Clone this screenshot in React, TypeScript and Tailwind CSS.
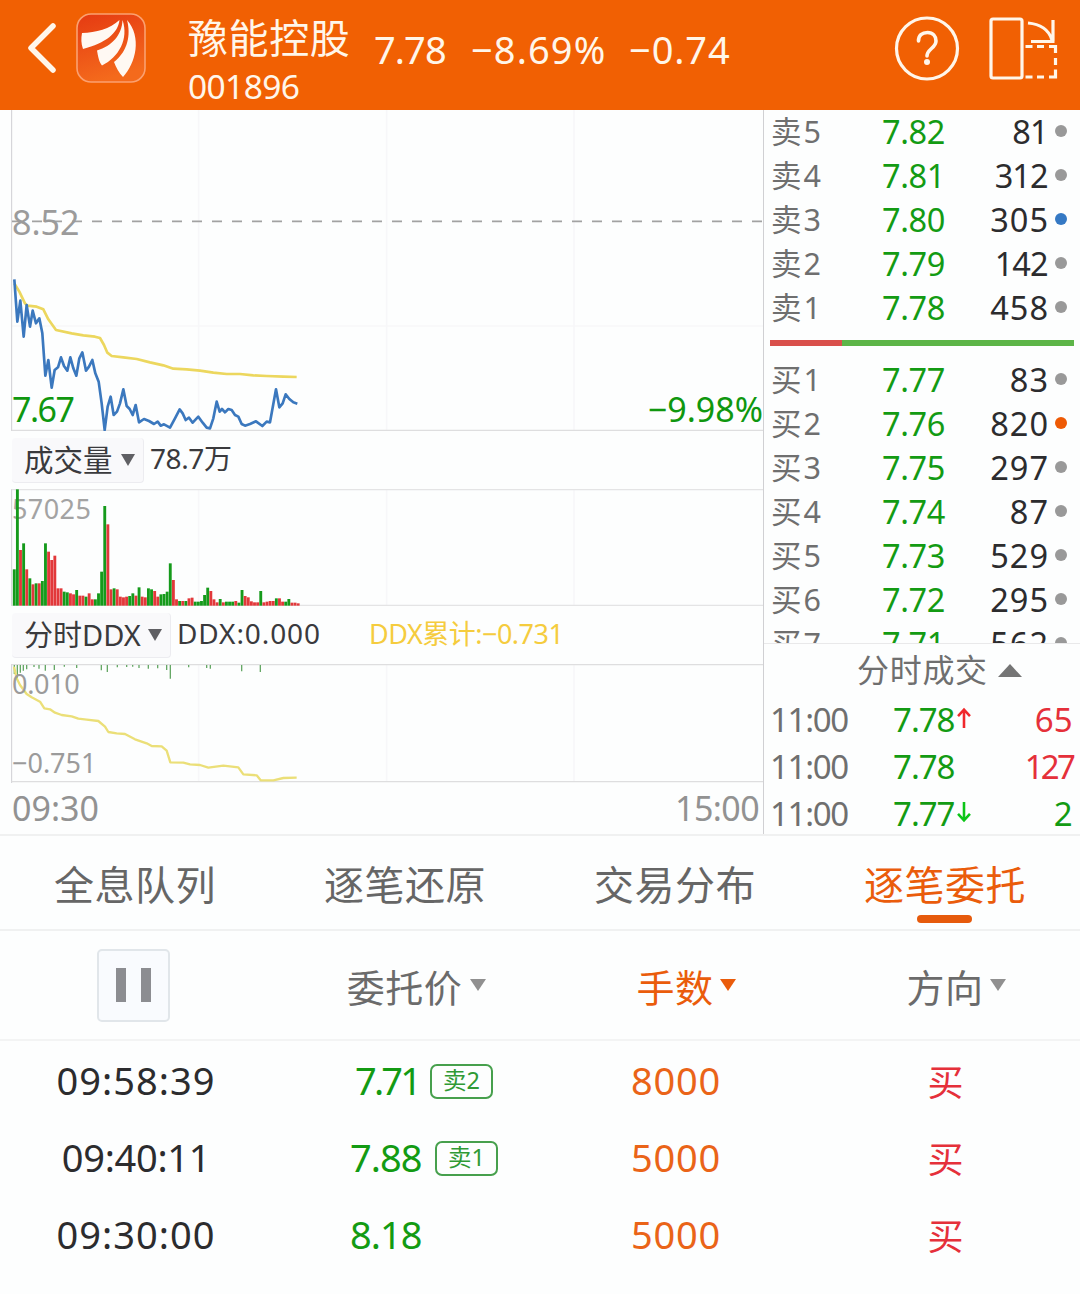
import React from 'react';
import clsx from 'clsx';

type Side = 'up' | 'down';

interface Quote {
  label: string;
  price: string;
  volume: string;
  dot?: string;
}

interface Tick {
  time: string;
  price: string;
  volume: string;
  arrow?: Side;
  side: Side;
}

interface Order {
  time: string;
  price: string;
  tag?: string;
  lots: string;
  priceClass?: string;
  timeClass?: string;
}

const asks: Quote[] = [
  { label: '卖5', price: '7.82', volume: '81' },
  { label: '卖4', price: '7.81', volume: '312' },
  { label: '卖3', price: '7.80', volume: '305', dot: 'bg-[#3579c4]' },
  { label: '卖2', price: '7.79', volume: '142' },
  { label: '卖1', price: '7.78', volume: '458' },
];

const bids: Quote[] = [
  { label: '买1', price: '7.77', volume: '83' },
  { label: '买2', price: '7.76', volume: '820', dot: 'bg-[#ee5a05]' },
  { label: '买3', price: '7.75', volume: '297' },
  { label: '买4', price: '7.74', volume: '87' },
  { label: '买5', price: '7.73', volume: '529' },
  { label: '买6', price: '7.72', volume: '295' },
  { label: '买7', price: '7.71', volume: '562' },
];

const ticks: Tick[] = [
  { time: '11:00', price: '7.78', volume: '65', arrow: 'up', side: 'up' },
  { time: '11:00', price: '7.78', volume: '127', side: 'up' },
  { time: '11:00', price: '7.77', volume: '2', arrow: 'down', side: 'down' },
];

const tabs = ['全息队列', '逐笔还原', '交易分布', '逐笔委托'];

const orders: Order[] = [
  { time: '09:58:39', price: '7.71', tag: '卖2', lots: '8000', priceClass: 'w-[62px] tracking-[-2.8px]' },
  { time: '09:40:11', price: '7.88', tag: '卖1', lots: '5000', timeClass: 'tracking-[-0.3px]' },
  { time: '09:30:00', price: '8.18', lots: '5000' },
];

// chart series use three units per pixel
const priceLine =
  '43,508 52,635 61,572 71,680 80,585 90,650 98,602 108,640 118,625 127,670 136,797 145,750 155,833 164,780 174,772 183,742 192,768 202,782 211,742 220,775 229,797 238,745 247,727 258,782 267,770 277,750 286,790 296,815 305,880 314,960 323,890 332,860 341,915 351,905 360,880 370,838 380,888 389,897 398,915 407,885 417,937 432,927 447,933 462,942 473,935 482,947 492,943 510,953 525,925 539,898 548,910 557,930 567,923 578,938 595,920 608,938 620,953 630,955 640,925 650,875 659,905 666,897 675,907 685,897 695,900 705,915 715,920 725,942 735,947 750,942 768,934 787,948 800,935 810,937 828,838 838,892 848,880 857,853 868,867 880,877 892,881';

const averageLine =
  '43,520 58,545 75,580 82,587 110,590 130,598 145,628 168,660 215,670 250,676 285,680 300,684 312,705 322,728 335,738 370,742 410,747 450,757 490,766 520,776 560,778 600,782 640,788 680,792 720,792 760,796 800,798 850,800 890,801';

const ddxLine =
  '42,8 50,43 60,63 80,90 95,100 120,113 133,133 150,136 165,146 185,153 215,157 235,164 260,167 295,171 315,188 325,204 350,208 375,210 405,226 440,238 455,246 485,247 500,260 511,295 550,296 570,301 600,303 625,311 670,305 715,310 730,331 770,334 782,349 820,349 850,342 890,341';

const volumes: number[] = [
  109, 349, 167, 187, 109, 82, 64, 67, 67, 74, 187, 162, 137, 150, 52, 52, 42, 40, 37, 34, 47, 30, 30, 27, 37, 19, 19, 37, 102, 299,
  244, 49, 52, 49, 27, 25, 27, 29, 37, 30, 55, 27, 25, 52, 49, 44, 27, 34, 35, 42, 127, 77, 19, 14, 14, 14, 22, 24, 12, 12,
  14, 32, 54, 44, 19, 10, 20, 10, 12, 12, 12, 14, 9, 47, 29, 25, 13, 10, 10, 44, 10, 12, 14, 14, 22, 22, 12, 12, 20, 9,
  9, 7,
];
// one letter per bar: g falls, r rises
const volumeSides =
  'ggrgrgrgrg' + 'grrrrrggrr' + 'grrgrrgggg' + 'rrgrrrrggr' + 'grrggrrggg' + 'grrgrgrrgg' + 'gggrrrgrgg' + 'grggrrrrrg' + 'rrrrgrrgg' + 'rrr';

const ddxTicks: [number, number][] = [
  [43, 30], [52, 45], [61, 26], [70, 20], [80, 16], [102, 9], [117, 14], [136, 20], [163, 18], [193, 8], [230, 12],
  [304, 19], [322, 24], [352, 10], [380, 9], [398, 8], [417, 12], [445, 14], [473, 13], [500, 18], [511, 44],
  [566, 10], [620, 12], [631, 14], [725, 22], [781, 24],
];

const Caret: React.FC<{ className?: string }> = ({ className }) => (
  <svg viewBox="0 0 16 12" preserveAspectRatio="none" className={clsx('shrink-0 fill-current', className)}>
    <path d="M0 0h16L8 12z" />
  </svg>
);

const Grid: React.FC<{ height: number }> = ({ height }) => (
  <g stroke="#f7f7f9" strokeWidth={5}>
    <path d={`M596 0V${height}M1160 0V${height}M1722 0V${height}`} />
  </g>
);

const Header: React.FC = () => (
  <header className="flex h-[110px] items-start bg-[#f16003] text-[#fff6ea]">
    <svg viewBox="0 0 30 52" className="ml-[27px] mt-[22px] h-[52px] w-[30px]" fill="none" stroke="currentColor" strokeWidth="5.5" strokeLinecap="round" strokeLinejoin="round">
      <path d="M26 4 4 26l22 22" />
    </svg>
    <svg viewBox="0 0 70 70" className="ml-[19px] mt-[13px] h-[70px] w-[70px]">
      <defs>
        <linearGradient id="logo" x1="0" y1="0" x2="0.3" y2="1">
          <stop offset="0" stopColor="#e53a12" />
          <stop offset="1" stopColor="#f46a1c" />
        </linearGradient>
      </defs>
      <rect x="1" y="1" width="68" height="68" rx="14" fill="url(#logo)" stroke="#fba070" strokeWidth="1.6" />
      <g fill="#fff9f3">
        <path d="M6 20C20 19.500 34 16 43.500 7C42 20 30 30 7 36C5 31 5 25 6 20z" />
        <path d="M46.500 7C53 26 43 44 26 52.500C23 49 22 43 21 37.500C36 33 46 22 46.500 7z" />
        <path d="M51 7C66 24 60 50 47 64C43 60 40 54 38 49C52 38 55 22 51 7z" />
      </g>
    </svg>
    <div className="ml-[42px] w-[187px]">
      <div className="mt-[15px] text-[40px] leading-[46px] tracking-[0.6px]">豫能控股</div>
      <div className="mt-[7px] text-[33.5px] leading-[36px] tracking-[-0.6px]">001896</div>
    </div>
    <div className="mt-[26px] flex text-[38px] leading-[46px]">
      <span className="-ml-px mr-px w-[96px] tracking-[-0.9px]">7.78</span>
      <span className="w-[158px] tracking-[1.1px]">−8.69%</span>
      <span className="tracking-[0.9px]">−0.74</span>
    </div>
    <svg viewBox="0 0 66 66" className="ml-auto mt-4 h-[66px] w-[66px]" fill="none" stroke="currentColor" strokeWidth="3.2" strokeLinecap="round">
      <circle cx="33" cy="32.5" r="30.5" />
      <path d="M24.500 25C24.500 19.500 28 16.500 33.500 16.500S42 20 42 25C42 32 33 33 33 40" strokeWidth="3.6" />
      <circle cx="33" cy="46" r="3" fill="currentColor" stroke="none" />
    </svg>
    <svg viewBox="0 0 70 66" className="ml-[29px] mr-[21px] mt-4 h-[66px] w-[70px]" fill="none" stroke="currentColor" strokeWidth="3.2">
      <rect x="2" y="3" width="31" height="59" rx="2" />
      <path d="M39 7C51 8 60 14 63 24M64 4V25M42 25.500H65.500" />
      <path d="M36.500 30.500H43.500M48 30.500H55M60 30.500H66.500V37M66.500 42V49M66.500 53.500V61H60M55 61H48M43.500 61H36.500" />
    </svg>
  </header>
);

const PriceChart: React.FC = () => (
  <div className="relative h-[321px]">
    <svg viewBox="0 0 2289 963" className="h-[321px] w-[763px]" fill="none">
      <Grid height={963} />
      <path d="M36 648H2289" stroke="#f7f7f9" strokeWidth={4} />
      <path d="M35 0V963" stroke="#cfcfd3" strokeWidth={3} />
      <path d="M35 961H2289" stroke="#dededf" strokeWidth={4} />
      <path d="M36 334H2289" stroke="#a2a2a2" strokeWidth={5} strokeDasharray="30 30" />
      <polyline points={averageLine} stroke="#ecd75e" strokeWidth={8} strokeLinejoin="round" />
      <polyline points={priceLine} stroke="#3b78be" strokeWidth={8} strokeLinejoin="round" />
    </svg>
    <span className="absolute left-[12px] top-[92px] text-[34px] leading-[40px] text-[#9b9b9b]">8.52</span>
    <span className="absolute left-[12px] top-[279px] text-[34px] leading-[40px] tracking-[-1.5px] text-[#0f970f]">7.67</span>
    <span className="absolute right-0 top-[279px] text-[34px] leading-[40px] text-[#0f970f]">−9.98%</span>
  </div>
);

const VolumeChart: React.FC = () => (
  <div className="relative h-[117px]">
    <svg viewBox="0 0 2289 351" className="h-[117px] w-[763px]">
      <Grid height={351} />
      <path d="M35 0V351" stroke="#cfcfd3" strokeWidth={3} />
      <path d="M35 2H2289M35 349H2289" stroke="#e4e4e5" strokeWidth={4} />
    </svg>
    <span className="absolute left-[12px] top-[3px] text-[27px] leading-[34px] tracking-[0.4px] text-[#a3a3a3]">57025</span>
    <svg viewBox="0 0 2289 351" className="absolute left-0 top-0 h-[117px] w-[763px]">
      {volumes.map((v, i) => (
        <rect key={i} x={38.5 + i * 9.36} y={350 - v} width={8.6} height={v} fill={volumeSides[i] === 'g' ? '#159a1b' : '#e2383a'} />
      ))}
    </svg>
  </div>
);

const DdxChart: React.FC = () => (
  <div className="relative h-[119px]">
    <svg viewBox="0 0 2289 357" className="h-[119px] w-[763px]" fill="none">
      <Grid height={351} />
      <path d="M35 0V357" stroke="#cfcfd3" strokeWidth={3} />
      <path d="M35 2H2289M35 353H2289" stroke="#dededf" strokeWidth={4} />
      {ddxTicks.map(([x, h]) => (
        <path key={x} d={`M${x} 3V${h}`} stroke="#66a866" strokeWidth={4} />
      ))}
      <polyline points={ddxLine} stroke="#ebdf78" strokeWidth={7} strokeLinejoin="round" />
    </svg>
    <span className="absolute left-[12px] top-[3px] text-[27px] leading-[34px] tracking-[-0.3px] text-[#9b9b9b]">0.010</span>
    <span className="absolute left-[12px] top-[82px] text-[27px] leading-[34px] text-[#9b9b9b]">−0.751</span>
  </div>
);

const ChartColumn: React.FC = () => (
  <div className="w-[764px] border-r border-[#d0d0d3]">
    <PriceChart />
    <div className="flex h-[58px] items-center pl-3 text-[#3a3a3d]">
      <div className="flex h-[45px] w-[132px] items-center rounded-sm border-b border-r border-[#ececf0] bg-[#f9f9fb] pl-3 text-[29.5px]">
        成交量
        <Caret className="ml-2 h-3 w-[14px] text-[#606064]" />
      </div>
      <span className="-mt-1 ml-1.5 text-[28px] tracking-[-0.4px]">78.7万</span>
    </div>
    <VolumeChart />
    <div className="flex h-[58px] items-center pl-3 text-[#3a3a3d]">
      <div className="flex h-[45px] w-[159px] items-center rounded-sm border-b border-r border-[#ececf0] bg-[#f9f9fb] pl-3 text-[29px]">
        分时DDX
        <Caret className="ml-[7px] h-3 w-[14px] text-[#606064]" />
      </div>
      <span className="-mt-1 ml-1.5 w-[192px] text-[28px] tracking-[0.9px]">DDX:0.000</span>
      <span className="-mt-1 text-[27px] tracking-[-0.5px] text-[#f5cc3e]">DDX累计:−0.731</span>
    </div>
    <DdxChart />
    <div className="flex h-[50px] items-center justify-between pl-3 pr-1 text-[34px] text-[#929292]">
      <span>09:30</span>
      <span className="tracking-[-0.6px]">15:00</span>
    </div>
  </div>
);

const QuoteRow: React.FC<{ quote: Quote }> = ({ quote }) => (
  <div className="flex h-11 shrink-0 items-center pl-[7px]">
    <span className="-mt-0.5 w-[61px] text-[30.5px] tracking-[2px] text-[#6f6f6f]">{quote.label}</span>
    <span className="w-[113px] text-right text-[32.5px] tracking-[-0.4px] text-[#139b13]">{quote.price}</span>
    <span
      className={clsx(
        'w-[104px] text-right text-[32.5px] text-[#2c2c2e]',
        quote.volume.includes('1') ? 'pr-[1.5px] tracking-[-1px]' : 'tracking-[1px]',
      )}
    >
      {quote.volume}
    </span>
    <span className={clsx('-mt-0.5 ml-1.5 h-3 w-3 rounded-full', quote.dot ?? 'bg-[#999999]')} />
  </div>
);

const Arrow: React.FC<{ side: Side }> = ({ side }) => (
  <svg
    viewBox="0 0 16 24"
    className={clsx('-mt-1 ml-[2px] h-[22px] w-4', side === 'up' ? 'text-[#f0282c]' : 'rotate-180 text-[#0cc518]')}
    fill="none"
    stroke="currentColor"
    strokeWidth="2.8"
  >
    <path d="M8 23V3M1.500 10 8 3l6.500 7" />
  </svg>
);

const OrderBook: React.FC = () => (
  <div className="flex w-[316px] flex-col">
    {asks.map((q) => (
      <QuoteRow key={q.label} quote={q} />
    ))}
    <div className="mx-1.5 mt-[10px] mb-[12px] flex h-[6px] shrink-0">
      <div className="w-[72px] bg-[#d9504b]" />
      <div className="flex-1 bg-[#5db548]" />
    </div>
    <div className="h-[285px] shrink-0 overflow-hidden">
      {bids.map((q) => (
        <QuoteRow key={q.label} quote={q} />
      ))}
    </div>
    <div className="flex h-[53px] shrink-0 items-center border-t border-[#e9e9ea] pl-[93px] text-[32px] tracking-[0.7px] text-[#6f6f6f]">
      分时成交
      <Caret className="ml-[10px] h-[13px] w-6 rotate-180 text-[#757575]" />
    </div>
    {ticks.map((tick, i) => (
      <div key={i} className="flex h-[47px] shrink-0 items-center pl-1.5 pr-[7px] text-[33px]">
        <span className="w-[123px] tracking-[-1.3px] text-[#6f6f6f]">{tick.time}</span>
        <span className="tracking-[-1px] text-[#139b13]">{tick.price}</span>
        {tick.arrow && <Arrow side={tick.arrow} />}
        <span
          className={clsx(
            'ml-auto',
            tick.volume.startsWith('1') ? 'tracking-[-2.8px]' : 'tracking-[0.3px]',
            tick.side === 'up' ? 'text-[#e5303a]' : 'text-[#139b13]',
          )}
        >
          {tick.volume}
        </span>
      </div>
    ))}
  </div>
);

const OrderList: React.FC = () => (
  <section>
    <div className="grid h-[110px] grid-cols-4 items-center border-b-2 border-[#f3f4f4] text-[38px] tracking-[0.5px] text-[#6b6b6b]">
      <div className="mr-[3px] flex h-[73px] w-[73px] items-center justify-center gap-[15px] justify-self-center rounded-[5px] border-2 border-[#e1e6ea] bg-[#f9fbfe]">
        <span className="h-[34px] w-[10px] bg-[#8c8d91]" />
        <span className="h-[34px] w-[10px] bg-[#8c8d91]" />
      </div>
      <div className="flex items-center justify-center">
        <span className="-ml-px mt-1">委托价</span>
        <Caret className="-mr-6 ml-2 h-3 w-4 text-[#909090]" />
      </div>
      <div className="flex items-center justify-center text-[#ea5c0b]">
        <span className="mt-1">手数</span>
        <Caret className="-mr-[22px] ml-1.5 h-3 w-4" />
      </div>
      <div className="flex items-center justify-center">
        <span className="mt-1">方向</span>
        <Caret className="-mr-[22px] ml-1.5 h-3 w-4 text-[#909090]" />
      </div>
    </div>
    {orders.map((o) => (
      <div key={o.time} className="grid h-[77px] grid-cols-4 items-center text-[38px]">
        <span className={clsx('pl-0.5 text-center text-[#2c2c2e]', o.timeClass ?? 'tracking-[1px]')}>{o.time}</span>
        <div className="flex items-center justify-center pl-[38px]">
          <span className={clsx('text-[#139b13]', o.priceClass ?? 'w-[72px] tracking-[-1px]')}>{o.price}</span>
          <span
            className={clsx(
              'ml-[13px] mt-1 flex h-[35px] w-[63px] items-center justify-center rounded-[7px] pb-0.5 text-[23.5px]',
              o.tag && 'border-2 border-[#47a04d] text-[#2f9a35]',
            )}
          >
            {o.tag}
          </span>
        </div>
        <span className="pl-0.5 text-center tracking-[0.8px] text-[#ea6418]">{o.lots}</span>
        <span className="pl-px pt-1.5 text-center text-[36px] text-[#e5303a]">买</span>
      </div>
    ))}
  </section>
);

export default function App() {
  return (
    <div className="h-[1294px] w-[1080px] overflow-hidden bg-[#fdfefe] font-['Noto_Sans','Noto_Sans_CJK_SC',sans-serif] leading-none whitespace-nowrap">
      <Header />
      <main className="flex h-[724px]">
        <ChartColumn />
        <OrderBook />
      </main>
      <nav className="grid h-[97px] grid-cols-4 border-b-2 border-t-2 border-[#f0f1f1] text-[40px] tracking-[0.5px] text-[#666666]">
        {tabs.map((tab, i) => (
          <div key={tab} className={clsx('flex flex-col items-center pt-[27px]', i === 3 && 'text-[#ea5c0b]')}>
            <span className="leading-[44px]">{tab}</span>
            {i === 3 && <span className="mr-px mt-[8px] h-2 w-[55px] rounded-full bg-[#e65a0c]" />}
          </div>
        ))}
      </nav>
      <OrderList />
    </div>
  );
}
